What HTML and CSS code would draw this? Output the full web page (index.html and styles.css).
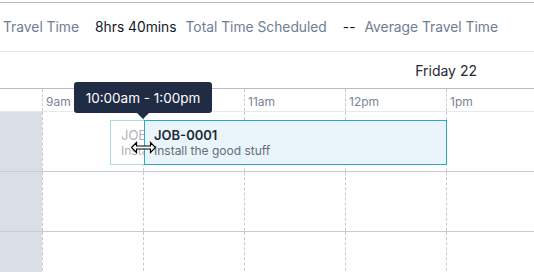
FILE: index.html
```html
<!DOCTYPE html>
<html lang="en">
<head>
  <meta charset="UTF-8">
  <meta name="viewport" content="width=device-width, initial-scale=1.0">
  <title>Schedule</title>
  <link rel="stylesheet" href="styles.css">
</head>
<body>

  <div class="board">

    <!-- Summary stats -->
    <div class="stats">
      <div class="stat">
        <span class="stat-label">Travel Time</span>
      </div>
      <div class="stat">
        <span class="stat-value">8hrs 40mins</span>
        <span class="stat-label">Total Time Scheduled</span>
      </div>
      <div class="stat">
        <span class="stat-value">--</span>
        <span class="stat-label">Average Travel Time</span>
      </div>
    </div>

    <!-- Day title -->
    <div class="day-header">Friday 22</div>

    <!-- Hour scale (10am sits under the tooltip) -->
    <div class="hours">
      <div class="gutter"></div>
      <div class="hour">9am</div>
      <div class="hour"></div>
      <div class="hour">11am</div>
      <div class="hour">12pm</div>
      <div class="hour">1pm</div>
    </div>

    <!-- Resource rows -->
    <div class="row">
      <div class="gutter"></div>
      <div class="slot"></div><div class="slot"></div><div class="slot"></div><div class="slot"></div><div class="slot"></div>
    </div>
    <div class="row">
      <div class="gutter"></div>
      <div class="slot"></div><div class="slot"></div><div class="slot"></div><div class="slot"></div><div class="slot"></div>
    </div>
    <div class="row">
      <div class="gutter"></div>
      <div class="slot"></div><div class="slot"></div><div class="slot"></div><div class="slot"></div><div class="slot"></div>
    </div>

    <!-- Original position while dragging (rest is hidden under the dragged card) -->
    <div class="job job-ghost" style="left:110px; top:120px; width:35px;">
      <div class="job-title">JOB-0001</div>
      <div class="job-desc">Install the good stuff</div>
    </div>

    <!-- Dragged job -->
    <div class="job job-active" style="left:144px; top:120px; width:303px;">
      <div class="job-title">JOB-0001</div>
      <div class="job-desc">Install the good stuff</div>
    </div>

    <!-- Drag tooltip -->
    <div class="tooltip">10:00am - 1:00pm</div>

    <!-- Resize cursor -->
    <svg class="cursor" width="25" height="13" viewBox="0 0 25 13">
      <polygon points="0.5,6.5 5.5,1.5 5.5,5 19.5,5 19.5,1.5 24.5,6.5 19.5,11.5 19.5,8 5.5,8 5.5,11.5" fill="#fff" stroke="#000" stroke-width="1.2"/>
    </svg>

  </div>

</body>
</html>
```

FILE: styles.css
```css
body {
  margin: 0;
  padding: 0;
  font-family: Inter, "Noto Sans", sans-serif;
  background: #fff;
  overflow: hidden;
}

.board {
  position: relative;
  width: 534px;
  height: 272px;
  padding-top: 2px;
  box-sizing: border-box;
  overflow: hidden;
}

.stats {
  display: flex;
  align-items: center;
  gap: 16px;
  height: 50px;
  padding-left: 3px;
  border-top: 1px solid #b6bcc8;
  border-bottom: 1px solid #e6e8ec;
  box-sizing: border-box;
  font-size: 13.8px;
  white-space: nowrap;
}

.stat {
  display: flex;
  gap: 9px;
}

.stat-label {
  color: #6e7d94;
}

.stat-value {
  color: #111827;
}

.day-header {
  display: flex;
  align-items: center;
  justify-content: flex-end;
  height: 36px;
  padding-right: 57px;
  font-size: 14px;
  color: #1f2937;
  border-bottom: 1px solid #b6bcc8;
}

.hours,
.row {
  display: grid;
  grid-template-columns: 42px repeat(5, 101px);
}

.hours {
  height: 23px;
  border-bottom: 1px solid #e6e8ec;
  box-sizing: border-box;
}

.hour {
  border-left: 1px dashed #c8cad3;
  padding: 5px 0 0 3px;
  font-size: 12px;
  line-height: 16px;
  color: #7b8596;
}

.row {
  height: 60px;
  border-bottom: 1px solid #c6cbd5;
  box-sizing: border-box;
}

.row .gutter {
  background: #dadee6;
}

.slot {
  border-left: 1px dashed #c8cad3;
}

.job {
  position: absolute;
  height: 45px;
  box-sizing: border-box;
  padding: 6px 9px;
  overflow: hidden;
  white-space: nowrap;
}

.job-ghost {
  border: 1px solid #a9dcea;
  background: #fff;
  padding-left: 10px;
}

.job-ghost .job-title,
.job-ghost .job-desc {
  color: #aeb3bb;
  font-weight: 400;
}

.job-active {
  border: 1px solid #2ba7c9;
  background: #e9f5fa;
}

.job-title {
  font-size: 13px;
  font-weight: 600;
  line-height: 16px;
  color: #1f2937;
}

.job-desc {
  font-size: 12px;
  line-height: 16px;
  color: #646c7a;
}

.tooltip {
  position: absolute;
  left: 74px;
  top: 82px;
  width: 138px;
  height: 31px;
  border-radius: 3px;
  background: #202b45;
  color: #fff;
  font-size: 13.5px;
  display: flex;
  align-items: center;
  justify-content: center;
}

.tooltip::after {
  content: "";
  position: absolute;
  left: 63px;
  top: 31px;
  border-left: 6px solid transparent;
  border-right: 6px solid transparent;
  border-top: 6px solid #202b45;
}

.cursor {
  position: absolute;
  left: 131px;
  top: 141px;
}
```
